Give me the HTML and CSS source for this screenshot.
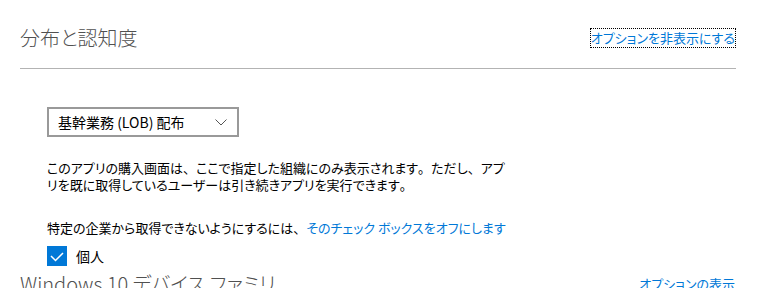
FILE: index.html
```html
<!DOCTYPE html>
<html lang="ja">
<head>
<meta charset="utf-8">
<link rel="stylesheet" href="styles.css">
</head>
<body>
<div class="page">
  <section class="section">
    <div class="section-head">
      <h2 class="section-title">分布と認知度</h2>
      <a class="head-link focused" href="#">オプションを非表示にする</a>
    </div>
    <div class="section-body">
      <div class="dropdown">
        <span class="dropdown-label">基幹業務 (LOB) 配布</span>
        <svg class="chevron" width="12" height="7" viewBox="0 0 12 7"><polyline points="0.5,0.5 6,6 11.5,0.5" fill="none" stroke="#555" stroke-width="1"/></svg>
      </div>
      <p class="desc">このアプリの購入画面は<span class="punct">、</span>ここで指定した組織にのみ表示されます<span class="punct">。</span>ただし<span class="punct">、</span>アプリを既に取得しているユーザーは引き続きアプリを実行できます<span class="punct">。</span></p>
      <p class="desc second">特定の企業から取得できないようにするには<span class="punct">、</span><a class="inline-link" href="#">そのチェック ボックスをオフにします</a></p>
      <label class="check-row">
        <span class="checkbox"><svg width="20" height="20" viewBox="0 0 20 20"><polyline points="4,10 8.5,14.5 16,7" fill="none" stroke="#fff" stroke-width="1.5"/></svg></span>
        <span class="check-label">個人</span>
      </label>
    </div>
  </section>
  <section class="section next">
    <div class="section-head plain">
      <h2 class="section-title">Windows 10 デバイス ファミリ</h2>
      <a class="head-link" href="#">オプションの表示</a>
    </div>
  </section>
</div>
</body>
</html>
```

FILE: styles.css
```css
html, body {
  margin: 0;
  padding: 0;
  background: #fff;
}
body {
  font-family: "Noto Sans CJK JP", "Noto Sans", sans-serif;
  font-feature-settings: "palt";
  color: #1a1a1a;
  overflow: hidden;
}
.page {
  padding: 24px 30px 0 20px;
  width: 716px;
}
.section-head {
  display: flex;
  justify-content: space-between;
  align-items: center;
  height: 28px;
  padding-bottom: 16px;
  border-bottom: 1px solid #b3b3b3;
}
.section-head.plain {
  border-bottom: none;
}
.section-title {
  margin: 0;
  font-size: 20px;
  font-weight: 300;
  line-height: 28px;
  color: #505050;
}
.head-link {
  font-size: 13px;
  line-height: 18px;
  color: #0078d7;
  text-decoration: none;
  margin-right: 1px;
}
.head-link.focused {
  outline: 1px dotted #000;
}
.section-body {
  padding-left: 27px;
  padding-top: 38px;
}
.dropdown {
  box-sizing: border-box;
  width: 192px;
  height: 30px;
  border: 2px solid #999;
  display: flex;
  align-items: center;
  justify-content: space-between;
  padding: 0 10px 0 9px;
}
.dropdown-label {
  font-size: 14px;
  color: #000;
}
.chevron {
  display: block;
  margin-top: 1px;
}
.desc {
  margin: 22px 0 0;
  width: 462px;
  font-size: 13px;
  line-height: 17px;
  color: #000;
}
.desc.second {
  margin-top: 26px;
  width: auto;
}
.punct {
  font-feature-settings: normal;
}
.inline-link {
  color: #0078d7;
  text-decoration: none;
}
.check-row {
  display: flex;
  align-items: center;
  gap: 9px;
  margin-top: 10px;
  height: 20px;
}
.checkbox {
  width: 20px;
  height: 20px;
  background: #0078d7;
  display: block;
}
.checkbox svg {
  display: block;
}
.check-label {
  font-size: 14px;
  line-height: 20px;
  color: #000;
}
.section.next {
  margin-top: 4px;
}
.section.next .section-head {
  padding-bottom: 0;
}
```
